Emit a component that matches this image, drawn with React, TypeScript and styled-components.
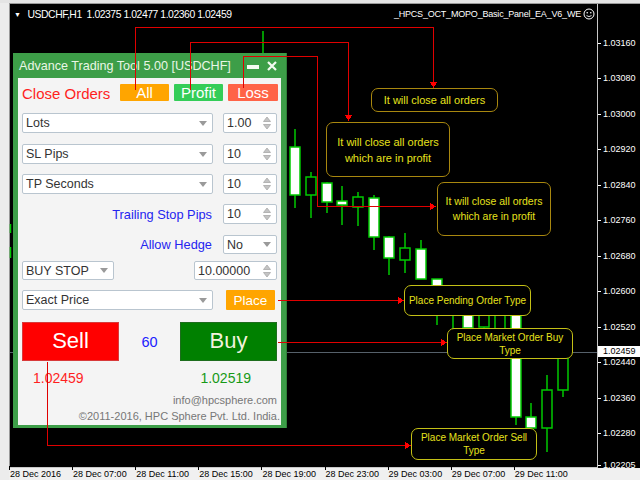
import React from "react";
import styled, { createGlobalStyle } from "styled-components";

const GlobalStyle = createGlobalStyle`
  html, body {
    margin: 0;
    padding: 0;
    background: #f0f0f0;
  }
  body {
    font-family: "Liberation Sans", Arial, sans-serif;
  }
`;

const Screen = styled.div`
  position: relative;
  width: 640px;
  height: 480px;
  overflow: hidden;
  background: #f0f0f0;
  display: flex;
  flex-direction: column;
`;

const TopStrip = styled.div`
  height: 3px;
  background: #e4e4e4;
`;

const Body = styled.div`
  flex: 1;
  display: flex;
`;

const LeftStrip = styled.div`
  width: 9px;
  background: #ececec;
`;

const ChartWin = styled.div`
  flex: 1;
  display: flex;
  flex-direction: column;
`;

const ChartBlack = styled.div`
  flex: 1;
  display: flex;
  background: #000;
  border-top: 1px solid #9a9a9a;
  border-left: 1px solid #9a9a9a;
`;

const PlotArea = styled.div`
  width: 587px;
  border-right: 1px solid #c8c8c8;
  border-bottom: 1px solid #c8c8c8;
  display: flex;
  flex-direction: column;
`;

const Header = styled.div`
  display: flex;
  justify-content: space-between;
  align-items: center;
  padding: 4px 2px 0 4px;
  height: 12px;
  color: #fff;
  font-size: 10.4px;
  letter-spacing: -0.45px;
  white-space: nowrap;
`;

const Symbol = styled.span`
  display: flex;
  align-items: center;
  gap: 7px;
`;

const Caret = styled.span`
  font-size: 7px;
`;

const EaName = styled.span`
  display: flex;
  align-items: center;
  gap: 2px;
  font-size: 9px;
  letter-spacing: -0.2px;
`;

const PriceAxis = styled.div`
  position: relative;
  flex: 1;
  color: #fff;
  font-size: 9px;
`;

const PriceLabel = styled.div`
  position: absolute;
  left: 5px;
  transform: translateY(-50%);
  white-space: nowrap;
  &::before {
    content: "";
    position: absolute;
    left: -5px;
    top: 50%;
    width: 3px;
    border-top: 1px solid #fff;
  }
`;

const CurrentPrice = styled.div`
  position: absolute;
  left: 0;
  right: 0;
  top: 342px;
  height: 11px;
  background: #fff;
  color: #000;
  font-size: 9px;
  line-height: 11px;
  padding-left: 5px;
`;

const TimeAxis = styled.div`
  position: relative;
  height: 12px;
  background: #f0f0f0;
  color: #000;
  font-size: 9px;
`;

const TimeLabel = styled.div`
  position: absolute;
  top: 0;
  white-space: nowrap;
  line-height: 12px;
  &::before {
    content: "";
    position: absolute;
    left: -1px;
    top: -2px;
    height: 4px;
    border-left: 1px solid #000;
  }
`;

const Layer = styled.svg<{ $z: number }>`
  position: absolute;
  left: 0;
  top: 0;
  width: 640px;
  height: 480px;
  pointer-events: none;
  z-index: ${(p) => p.$z};
`;

/* ---------- panel ---------- */

const Panel = styled.div`
  position: absolute;
  left: 13px;
  top: 53px;
  width: 274px;
  height: 375px;
  box-sizing: border-box;
  background: #3d9e48;
  border-right: 1px solid #2f7f38;
  padding: 0 5px 3px 5px;
  display: flex;
  flex-direction: column;
  z-index: 2;
`;

const TitleBar = styled.div`
  height: 25px;
  display: flex;
  align-items: center;
  padding: 0 4px 0 1px;
  color: #eaf6e6;
  font-size: 12.6px;
`;

const TitleText = styled.span`
  flex: 1;
  white-space: nowrap;
`;

const WinControls = styled.div`
  display: flex;
  align-items: center;
  gap: 8px;
`;

const MinBar = styled.span`
  width: 12px;
  height: 4px;
  margin-top: 3px;
  background: #f4fbf2;
`;

const Inner = styled.div`
  flex: 1;
  background: #f4f4f4;
  padding: 4px 4px 0 4px;
  display: flex;
  flex-direction: column;
`;

const Row = styled.div<{ $mt: number; $h: number; $justify?: string }>`
  display: flex;
  align-items: center;
  justify-content: ${(p) => p.$justify || "space-between"};
  gap: ${(p) => (p.$justify === "flex-end" ? "11px" : "0")};
  margin-top: ${(p) => p.$mt}px;
  height: ${(p) => p.$h}px;
`;

const CloseLabel = styled.span`
  color: #ff1f1f;
  font-size: 15px;
  margin-top: 2px;
`;

const BtnGroup = styled.div`
  display: flex;
  gap: 5px;
  margin-right: -1px;
`;

const SmallBtn = styled.div<{ $bg: string; $w: number; $size?: number }>`
  width: ${(p) => p.$w}px;
  height: 100%;
  background: ${(p) => p.$bg};
  color: #fff;
  font-size: ${(p) => p.$size || 15}px;
  border-radius: 1px;
  display: flex;
  align-items: center;
  justify-content: center;
  box-sizing: border-box;
`;

const Field = styled.div<{ $w: number }>`
  width: ${(p) => p.$w}px;
  height: 100%;
  box-sizing: border-box;
  background: #fff;
  border: 1px solid #b9c5cf;
  border-radius: 2px;
  display: flex;
  align-items: center;
  justify-content: space-between;
  padding: 0 5px 0 3px;
  color: #333;
  font-size: 12.5px;
`;

const BlueLabel = styled.span`
  color: #2424f0;
  font-size: 12.8px;
`;

const BigBtn = styled.div<{ $bg: string; $border: string; $color: string }>`
  width: 97px;
  height: 100%;
  box-sizing: border-box;
  background: ${(p) => p.$bg};
  border: 1px solid ${(p) => p.$border};
  color: ${(p) => p.$color};
  font-size: 22px;
  display: flex;
  align-items: center;
  justify-content: center;
  padding-bottom: 2px;
`;

const Spread = styled.span`
  color: #2020ff;
  font-size: 14.5px;
`;

const Prices = styled.div`
  display: flex;
  justify-content: space-between;
  align-items: center;
  margin-top: 8px;
  height: 18px;
  padding: 0 26px 0 11px;
`;

const Price = styled.span<{ $color: string }>`
  color: ${(p) => p.$color};
  font-size: 14px;
`;

const Footer = styled.div<{ $mt: number; $mr: number }>`
  text-align: right;
  color: #777;
  font-size: 11px;
  line-height: 14px;
  margin-top: ${(p) => p.$mt}px;
  margin-right: ${(p) => p.$mr}px;
  white-space: nowrap;
`;

/* ---------- chart notes ---------- */

const Note = styled.div<{
  $x: number;
  $y: number;
  $w: number;
  $h: number;
  $border: string;
  $size: number;
  $lh: number;
}>`
  position: absolute;
  left: ${(p) => p.$x}px;
  top: ${(p) => p.$y}px;
  width: ${(p) => p.$w}px;
  height: ${(p) => p.$h}px;
  box-sizing: border-box;
  border: 1.5px solid ${(p) => p.$border};
  border-radius: 7px;
  background: #000;
  color: #e6e21c;
  font-size: ${(p) => p.$size}px;
  line-height: ${(p) => p.$lh}px;
  display: flex;
  align-items: center;
  justify-content: center;
  text-align: center;
  white-space: nowrap;
  z-index: 3;
`;

const SelectArrow = () => (
  <svg width="8" height="5" viewBox="0 0 8 5">
    <polygon points="0,0 8,0 4,5" fill="#9a9a9a" />
  </svg>
);

const SpinArrows = () => (
  <svg width="8" height="14" viewBox="0 0 8 14">
    <polygon points="0.5,5.5 4,1 7.5,5.5" fill="#c4c4c4" stroke="#a8a8a8" strokeWidth="0.8" />
    <polygon points="0.5,8.5 4,13 7.5,8.5" fill="#c4c4c4" stroke="#a8a8a8" strokeWidth="0.8" />
  </svg>
);

const Smiley = () => (
  <svg width="12" height="12" viewBox="0 0 12 12">
    <circle cx="6" cy="6" r="5" fill="none" stroke="#fff" strokeWidth="1" />
    <circle cx="4.2" cy="4.8" r="0.8" fill="#fff" />
    <circle cx="7.8" cy="4.8" r="0.8" fill="#fff" />
    <path d="M3.5 7.6 Q6 9.6 8.5 7.6" fill="none" stroke="#fff" strokeWidth="0.9" />
  </svg>
);

const CloseIcon = () => (
  <svg width="10" height="10" viewBox="0 0 10 10">
    <path d="M1 1 L9 9 M9 1 L1 9" stroke="#f4fbf2" strokeWidth="2.2" />
  </svg>
);

type Candle = { x: number; wt: number; wb: number; bt: number; bb: number; fill: boolean };

const candles: Candle[] = [
  { x: 263, wt: 31, wb: 110, bt: 60, bb: 100, fill: true },
  { x: 295, wt: 129, wb: 208, bt: 147, bb: 195, fill: true },
  { x: 311, wt: 172, wb: 218, bt: 177, bb: 195, fill: false },
  { x: 327, wt: 182, wb: 213, bt: 183, bb: 202, fill: true },
  { x: 342, wt: 186, wb: 225, bt: 201, bb: 205, fill: true },
  { x: 358, wt: 192, wb: 226, bt: 197, bb: 207, fill: false },
  { x: 374, wt: 195, wb: 250, bt: 198, bb: 237, fill: true },
  { x: 389, wt: 236, wb: 275, bt: 237, bb: 258, fill: true },
  { x: 405, wt: 233, wb: 273, bt: 248, bb: 260, fill: false },
  { x: 421, wt: 240, wb: 279, bt: 249, bb: 279, fill: true },
  { x: 437, wt: 279, wb: 325, bt: 279, bb: 300, fill: true },
  { x: 453, wt: 300, wb: 330, bt: 305, bb: 314, fill: false },
  { x: 468, wt: 300, wb: 330, bt: 302, bb: 328, fill: true },
  { x: 484, wt: 305, wb: 332, bt: 310, bb: 327, fill: false },
  { x: 500, wt: 295, wb: 330, bt: 300, bb: 330, fill: false },
  { x: 516, wt: 305, wb: 425, bt: 310, bb: 417, fill: true },
  { x: 531, wt: 403, wb: 428, bt: 417, bb: 428, fill: true },
  { x: 547, wt: 375, wb: 452, bt: 390, bb: 428, fill: false },
  { x: 563, wt: 340, wb: 397, bt: 350, bb: 390, fill: false },
];

const priceLevels = [
  "1.03160",
  "1.03080",
  "1.03000",
  "1.02920",
  "1.02840",
  "1.02760",
  "1.02680",
  "1.02600",
  "1.02520",
  "1.02440",
  "1.02360",
  "1.02280",
];

const timeLabels = [
  "28 Dec 2016",
  "28 Dec 07:00",
  "28 Dec 11:00",
  "28 Dec 15:00",
  "28 Dec 19:00",
  "28 Dec 23:00",
  "29 Dec 03:00",
  "29 Dec 07:00",
  "29 Dec 11:00",
];

const RED = "#e00000";

const Arrow = ({ d, tip }: { d: string; tip: string }) => (
  <>
    <path d={d} fill="none" stroke={RED} strokeWidth="1.2" />
    <polygon points={tip} fill="#ff0000" />
  </>
);

export default function App() {
  return (
    <>
      <GlobalStyle />
      <Screen>
        <TopStrip />
        <Body>
          <LeftStrip />
          <ChartWin>
            <ChartBlack>
              <PlotArea>
                <Header>
                  <Symbol>
                    <Caret>▼</Caret>
                    <span>USDCHF,H1&nbsp; 1.02375 1.02477 1.02360 1.02459</span>
                  </Symbol>
                  <EaName>
                    _HPCS_OCT_MOPO_Basic_Panel_EA_V6_WE
                    <Smiley />
                  </EaName>
                </Header>
              </PlotArea>
              <PriceAxis>
                {priceLevels.map((p, i) => (
                  <PriceLabel key={p} style={{ top: 39 + i * 35.45 }}>
                    {p}
                  </PriceLabel>
                ))}
                <PriceLabel style={{ top: 461 }}>1.02205</PriceLabel>
                <CurrentPrice>1.02459</CurrentPrice>
              </PriceAxis>
            </ChartBlack>
            <TimeAxis>
              {timeLabels.map((t, i) => (
                <TimeLabel key={t} style={{ left: 1 + i * 63.1 }}>
                  {t}
                </TimeLabel>
              ))}
            </TimeAxis>
          </ChartWin>
        </Body>

        <Layer $z={1} viewBox="0 0 640 480">
          <line x1="10" y1="352.5" x2="597" y2="352.5" stroke="#56606a" strokeWidth="1" />
          <line x1="10.5" y1="224" x2="10.5" y2="233" stroke="#00c800" strokeWidth="1.5" />
          <line x1="10.5" y1="247" x2="10.5" y2="258" stroke="#00c800" strokeWidth="1.5" />
          {candles.map((c) => (
            <g key={c.x}>
              <line x1={c.x} y1={c.wt} x2={c.x} y2={c.wb} stroke="#00c800" strokeWidth="1.5" />
              <rect
                x={c.x - 5}
                y={c.bt}
                width="10"
                height={Math.max(c.bb - c.bt, 2)}
                fill={c.fill ? "#ffffff" : "#000000"}
                stroke="#00c800"
                strokeWidth="1.5"
              />
            </g>
          ))}
        </Layer>

        <Panel>
          <TitleBar>
            <TitleText>Advance Trading Tool 5.00 [USDCHF]</TitleText>
            <WinControls>
              <MinBar />
              <CloseIcon />
            </WinControls>
          </TitleBar>
          <Inner>
            <Row $mt={0} $h={21}>
              <CloseLabel>Close Orders</CloseLabel>
              <BtnGroup>
                <SmallBtn $bg="#ffa500" $w={49}>All</SmallBtn>
                <SmallBtn $bg="#34cd58" $w={49}>Profit</SmallBtn>
                <SmallBtn $bg="#ff6347" $w={50}>Loss</SmallBtn>
              </BtnGroup>
            </Row>
            <Row $mt={10} $h={20}>
              <Field $w={191}>
                Lots <SelectArrow />
              </Field>
              <Field $w={54}>
                1.00 <SpinArrows />
              </Field>
            </Row>
            <Row $mt={11} $h={20}>
              <Field $w={191}>
                SL Pips <SelectArrow />
              </Field>
              <Field $w={54}>
                10 <SpinArrows />
              </Field>
            </Row>
            <Row $mt={10} $h={20}>
              <Field $w={191}>
                TP Seconds <SelectArrow />
              </Field>
              <Field $w={54}>
                10 <SpinArrows />
              </Field>
            </Row>
            <Row $mt={10} $h={20} $justify="flex-end">
              <BlueLabel>Trailing Stop Pips</BlueLabel>
              <Field $w={54}>
                10 <SpinArrows />
              </Field>
            </Row>
            <Row $mt={11} $h={19} $justify="flex-end">
              <BlueLabel>Allow Hedge</BlueLabel>
              <Field $w={54}>
                No <SelectArrow />
              </Field>
            </Row>
            <Row $mt={7} $h={19}>
              <Field $w={92}>
                BUY STOP <SelectArrow />
              </Field>
              <Field $w={83}>
                10.00000 <SpinArrows />
              </Field>
            </Row>
            <Row $mt={10} $h={20}>
              <Field $w={191}>
                Exact Price <SelectArrow />
              </Field>
              <SmallBtn $bg="#ffa500" $w={49} $size={13.5} style={{ marginRight: 2 }}>
                Place
              </SmallBtn>
            </Row>
            <Row $mt={12} $h={39}>
              <BigBtn $bg="#ff0000" $border="#d83a3a" $color="#fff">
                Sell
              </BigBtn>
              <Spread>60</Spread>
              <BigBtn $bg="#008000" $border="#1d6d1d" $color="#f2f2dc">
                Buy
              </BigBtn>
            </Row>
            <Prices>
              <Price $color="#ff1f1f">1.02459</Price>
              <Price $color="#179a17">1.02519</Price>
            </Prices>
            <Footer $mt={6} $mr={0}>info@hpcsphere.com</Footer>
            <Footer $mt={2} $mr={-3}>©2011-2016, HPC Sphere Pvt. Ltd. India.</Footer>
          </Inner>
        </Panel>

        <Layer $z={3} viewBox="0 0 640 480" shapeRendering="crispEdges">
          <Arrow d="M135.5 90 V27.5 H433.5 V82" tip="430,82 437,82 433.5,88" />
          <Arrow d="M190.5 90 V42.5 H348.5 V115" tip="345,115 352,115 348.5,121" />
          <Arrow d="M243.5 88 V56.5 H317.5 V206.5 H430" tip="430,203 430,210 436,206.5" />
          <Arrow d="M278 300.5 H398" tip="398,297 398,304 404,300.5" />
          <Arrow d="M278 342.5 H441" tip="441,339 441,346 447,342.5" />
          <Arrow d="M47.5 362 V445.5 H405" tip="405,442 405,449 411,445.5" />
        </Layer>

        <Note $x={371} $y={88} $w={127} $h={24} $border="#a8870f" $size={11} $lh={14}>
          It will close all orders
        </Note>
        <Note $x={326} $y={122} $w={124} $h={55} $border="#a8870f" $size={11} $lh={16}>
          It will close all orders
          <br />
          which are in profit
        </Note>
        <Note $x={437} $y={182} $w={114} $h={54} $border="#a8870f" $size={10.5} $lh={15}>
          It will close all orders
          <br />
          which are in profit
        </Note>
        <Note $x={404} $y={285} $w={127} $h={31} $border="#c4c016" $size={10} $lh={13}>
          Place Pending Order Type
        </Note>
        <Note $x={447} $y={328} $w={126} $h={31} $border="#c4c016" $size={10} $lh={13}>
          Place Market Order Buy
          <br />
          Type
        </Note>
        <Note $x={411} $y={428} $w={126} $h={32} $border="#c4c016" $size={10} $lh={13}>
          Place Market Order Sell
          <br />
          Type
        </Note>
      </Screen>
    </>
  );
}
